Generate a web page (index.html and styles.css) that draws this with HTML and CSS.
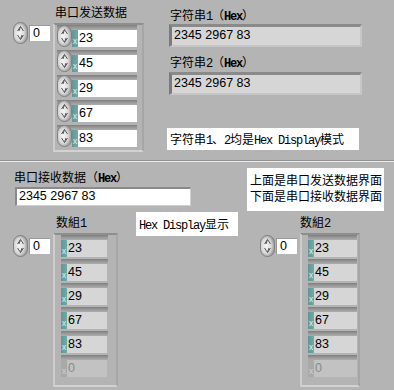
FILE: index.html
```html
<!DOCTYPE html>
<html>
<head>
<meta charset="utf-8">
<link rel="stylesheet" href="styles.css">
</head>
<body>
<svg class="defs" width="0" height="0">
  <defs>
    <radialGradient id="sg" cx="0.42" cy="0.5" r="0.62">
      <stop offset="0" stop-color="#f6f6f6"/>
      <stop offset="0.55" stop-color="#dadada"/>
      <stop offset="1" stop-color="#8c8c8c"/>
    </radialGradient>
  </defs>
</svg>

<section class="panel top">
  <div class="lbl l-send">串口发送数据</div>

  <div class="idx idx-send">
    <svg class="spin" viewBox="0 0 15 22" width="15" height="22"><rect x="0.5" y="0.5" width="14" height="21" rx="7" fill="url(#sg)" stroke="#808080"/><path d="M4.5 9 L7.5 4.5 L10.5 9" fill="none" stroke="#5a5a5a"/><path d="M7.5 4.5 L6 9" fill="none" stroke="#5a5a5a"/><path d="M4.5 13 L7.5 17.5 L10.5 13" fill="none" stroke="#5a5a5a"/><path d="M7.5 17.5 L9 13" fill="none" stroke="#5a5a5a"/></svg>
    <div class="ibox">0</div>
  </div>

  <div class="arr arr-send">
    <div class="row"><svg class="spin" viewBox="0 0 15 22" width="15" height="22"><rect x="0.5" y="0.5" width="14" height="21" rx="7" fill="url(#sg)" stroke="#808080"/><path d="M4.5 9 L7.5 4.5 L10.5 9" fill="none" stroke="#5a5a5a"/><path d="M7.5 4.5 L6 9" fill="none" stroke="#5a5a5a"/><path d="M4.5 13 L7.5 17.5 L10.5 13" fill="none" stroke="#5a5a5a"/><path d="M7.5 17.5 L9 13" fill="none" stroke="#5a5a5a"/></svg><span class="mk">x</span><span class="ebox ctl">23</span></div>
    <div class="row"><svg class="spin" viewBox="0 0 15 22" width="15" height="22"><rect x="0.5" y="0.5" width="14" height="21" rx="7" fill="url(#sg)" stroke="#808080"/><path d="M4.5 9 L7.5 4.5 L10.5 9" fill="none" stroke="#5a5a5a"/><path d="M7.5 4.5 L6 9" fill="none" stroke="#5a5a5a"/><path d="M4.5 13 L7.5 17.5 L10.5 13" fill="none" stroke="#5a5a5a"/><path d="M7.5 17.5 L9 13" fill="none" stroke="#5a5a5a"/></svg><span class="mk">x</span><span class="ebox ctl">45</span></div>
    <div class="row"><svg class="spin" viewBox="0 0 15 22" width="15" height="22"><rect x="0.5" y="0.5" width="14" height="21" rx="7" fill="url(#sg)" stroke="#808080"/><path d="M4.5 9 L7.5 4.5 L10.5 9" fill="none" stroke="#5a5a5a"/><path d="M7.5 4.5 L6 9" fill="none" stroke="#5a5a5a"/><path d="M4.5 13 L7.5 17.5 L10.5 13" fill="none" stroke="#5a5a5a"/><path d="M7.5 17.5 L9 13" fill="none" stroke="#5a5a5a"/></svg><span class="mk">x</span><span class="ebox ctl">29</span></div>
    <div class="row"><svg class="spin" viewBox="0 0 15 22" width="15" height="22"><rect x="0.5" y="0.5" width="14" height="21" rx="7" fill="url(#sg)" stroke="#808080"/><path d="M4.5 9 L7.5 4.5 L10.5 9" fill="none" stroke="#5a5a5a"/><path d="M7.5 4.5 L6 9" fill="none" stroke="#5a5a5a"/><path d="M4.5 13 L7.5 17.5 L10.5 13" fill="none" stroke="#5a5a5a"/><path d="M7.5 17.5 L9 13" fill="none" stroke="#5a5a5a"/></svg><span class="mk">x</span><span class="ebox ctl">67</span></div>
    <div class="row"><svg class="spin" viewBox="0 0 15 22" width="15" height="22"><rect x="0.5" y="0.5" width="14" height="21" rx="7" fill="url(#sg)" stroke="#808080"/><path d="M4.5 9 L7.5 4.5 L10.5 9" fill="none" stroke="#5a5a5a"/><path d="M7.5 4.5 L6 9" fill="none" stroke="#5a5a5a"/><path d="M4.5 13 L7.5 17.5 L10.5 13" fill="none" stroke="#5a5a5a"/><path d="M7.5 17.5 L9 13" fill="none" stroke="#5a5a5a"/></svg><span class="mk">x</span><span class="ebox ctl">83</span></div>
  </div>

  <div class="lbl l-s1">字符串<span class="m">1</span>（<span class="m b">Hex</span>）</div>
  <div class="strind s1">2345 2967 83</div>
  <div class="lbl l-s2">字符串<span class="m">2</span>（<span class="m b">Hex</span>）</div>
  <div class="strind s2">2345 2967 83</div>

  <div class="note n-mode">字符串<span class="m">1</span>、<span class="m">2</span>均是<span class="m">Hex Display</span>模式</div>
</section>

<section class="panel bottom">
  <div class="lbl l-recv">串口接收数据（<span class="m b">Hex</span>）</div>
  <div class="strctl">2345 2967 83</div>

  <div class="note n-info">上面是串口发送数据界面<br>下面是串口接收数据界面</div>
  <div class="note n-hex"><span class="m">Hex Display</span>显示</div>

  <div class="lbl l-a1">数組<span class="m">1</span></div>
  <div class="idx idx-a1">
    <svg class="spin" viewBox="0 0 15 22" width="15" height="22"><rect x="0.5" y="0.5" width="14" height="21" rx="7" fill="url(#sg)" stroke="#808080"/><path d="M4.5 9 L7.5 4.5 L10.5 9" fill="none" stroke="#5a5a5a"/><path d="M7.5 4.5 L6 9" fill="none" stroke="#5a5a5a"/><path d="M4.5 13 L7.5 17.5 L10.5 13" fill="none" stroke="#5a5a5a"/><path d="M7.5 17.5 L9 13" fill="none" stroke="#5a5a5a"/></svg>
    <div class="ibox">0</div>
  </div>
  <div class="arr arr-ind a1">
    <div class="row"><span class="mk">x</span><span class="ebox">23</span></div>
    <div class="row"><span class="mk">x</span><span class="ebox">45</span></div>
    <div class="row"><span class="mk">x</span><span class="ebox">29</span></div>
    <div class="row"><span class="mk">x</span><span class="ebox">67</span></div>
    <div class="row"><span class="mk">x</span><span class="ebox">83</span></div>
    <div class="row off"><span class="mk">x</span><span class="ebox">0</span></div>
  </div>

  <div class="lbl l-a2">数組<span class="m">2</span></div>
  <div class="idx idx-a2">
    <svg class="spin" viewBox="0 0 15 22" width="15" height="22"><rect x="0.5" y="0.5" width="14" height="21" rx="7" fill="url(#sg)" stroke="#808080"/><path d="M4.5 9 L7.5 4.5 L10.5 9" fill="none" stroke="#5a5a5a"/><path d="M7.5 4.5 L6 9" fill="none" stroke="#5a5a5a"/><path d="M4.5 13 L7.5 17.5 L10.5 13" fill="none" stroke="#5a5a5a"/><path d="M7.5 17.5 L9 13" fill="none" stroke="#5a5a5a"/></svg>
    <div class="ibox">0</div>
  </div>
  <div class="arr arr-ind a2">
    <div class="row"><span class="mk">x</span><span class="ebox">23</span></div>
    <div class="row"><span class="mk">x</span><span class="ebox">45</span></div>
    <div class="row"><span class="mk">x</span><span class="ebox">29</span></div>
    <div class="row"><span class="mk">x</span><span class="ebox">67</span></div>
    <div class="row"><span class="mk">x</span><span class="ebox">83</span></div>
    <div class="row off"><span class="mk">x</span><span class="ebox">0</span></div>
  </div>
</section>
</body>
</html>
```

FILE: styles.css
```css
html, body {
  margin: 0;
  padding: 0;
}
body {
  width: 394px;
  height: 390px;
  overflow: hidden;
  background: #b4b4b4;
  font-family: "Noto Sans CJK SC", sans-serif;
  font-size: 12px;
  color: #000;
}
.defs {
  position: absolute;
  width: 0;
  height: 0;
}

.panel {
  position: relative;
  width: 394px;
}
.top {
  height: 160px;
  border-bottom: 1px solid #929292;
}
.bottom {
  height: 228px;
  border-top: 1px solid #ececec;
}

/* labels (free-canvas positions on the front panel) */
.lbl {
  position: absolute;
  line-height: 14px;
  white-space: nowrap;
}
.m {
  font-family: "Liberation Mono", monospace;
  font-size: 12px;
  letter-spacing: -1.2px;
}
.b {
  font-weight: bold;
}
.l-send { left: 55px; top: 5px; }
.l-s1 { left: 170px; top: 8px; }
.l-s2 { left: 170px; top: 55px; }
.l-recv { left: 14px; top: 8px; }
.l-a1 { left: 56px; top: 53px; }
.l-a2 { left: 300px; top: 53px; }

/* spinner + index box */
.spin {
  display: block;
  flex: none;
}
.idx {
  position: absolute;
  display: flex;
  align-items: center;
  gap: 1px;
}
.idx-send { left: 13px; top: 22px; }
.idx-a1 { left: 13px; top: 73px; }
.idx-a2 { left: 260px; top: 73px; }
.ibox {
  width: 21px;
  height: 16px;
  box-sizing: border-box;
  background: #fff;
  border-top: 1px solid #9a9a9a;
  border-left: 1px solid #9a9a9a;
  padding-left: 3px;
  font-family: "Liberation Sans", sans-serif;
  font-size: 12.5px;
  line-height: 15px;
}

/* array frames */
.arr {
  position: absolute;
  box-sizing: border-box;
  display: flex;
  flex-direction: column;
  border: 2px solid;
  border-color: #8e8e8e #a6a6a6 #d2d2d2 #cdcdcd;
}
.arr-send {
  left: 53px;
  top: 23px;
  width: 91px;
  height: 129px;
  padding: 0 5px 0 2px;
}
.row {
  display: flex;
  align-items: flex-end;
  padding-bottom: 3px;
  height: 25px;
  box-sizing: border-box;
  background: linear-gradient(to bottom, #7e7e7e 0, #9e9e9e 3px, #acacac 5px, transparent 5px);
}
.mk {
  width: 6px;
  height: 17px;
  flex: none;
  box-sizing: border-box;
  background: linear-gradient(to right, #5d9896, #73a9a7);
  color: #d6f2f0;
  font-family: "Liberation Sans", sans-serif;
  font-size: 9px;
  line-height: 9px;
  display: flex;
  align-items: flex-end;
  justify-content: center;
  padding-bottom: 1px;
}
.ebox {
  height: 17px;
  box-sizing: border-box;
  background: #d6d6d6;
  padding-left: 1px;
  font-family: "Liberation Sans", sans-serif;
  font-size: 12.5px;
  line-height: 17px;
}
.ebox.ctl {
  width: 59px;
  background: #fff;
}

.arr-ind {
  top: 71px;
  height: 154px;
  padding-bottom: 6px;
}
.arr-ind .row {
  height: 24px;
  padding-bottom: 2px;
}
.a1 {
  left: 53px;
  width: 65px;
  padding-left: 6px;
  padding-right: 8px;
}
.a1 .ebox { width: 40px; }
.a2 {
  left: 300px;
  width: 60px;
  padding-left: 6px;
  padding-right: 1px;
}
.a2 .ebox { width: 43px; }
.row.off .mk {
  background: #a9a9a9;
  color: #cfcfcf;
}
.row.off .ebox {
  background: #c2c2c2;
  color: #8a8a8a;
}

/* string indicators / control */
.strind {
  position: absolute;
  left: 169px;
  width: 193px;
  height: 23px;
  box-sizing: border-box;
  background: #d6d6d6;
  border-style: solid;
  border-width: 3px 2px 2px 3px;
  border-color: #8a8a8a #c6c6c6 #c6c6c6 #7a7a7a;
  padding-left: 2px;
  font-family: "Liberation Sans", sans-serif;
  font-size: 12.5px;
  line-height: 17px;
}
.s1 { top: 24px; }
.s2 { top: 72px; }
.strctl {
  position: absolute;
  left: 15px;
  top: 25px;
  width: 176px;
  height: 19px;
  box-sizing: border-box;
  background: #fff;
  border-style: solid;
  border-width: 2px 1px 1px 2px;
  border-color: #8a8a8a #d0d0d0 #d0d0d0 #8a8a8a;
  padding-left: 2px;
  font-family: "Liberation Sans", sans-serif;
  font-size: 12.5px;
  line-height: 15px;
}

/* free labels */
.note {
  position: absolute;
  background: #fff;
  box-sizing: border-box;
  white-space: nowrap;
  padding-left: 3px;
}
.n-mode {
  left: 167px;
  top: 128px;
  width: 192px;
  height: 22px;
  line-height: 22px;
}
.n-info {
  left: 247px;
  top: 6px;
  width: 137px;
  height: 43px;
  padding-top: 4px;
  line-height: 16px;
}
.n-hex {
  left: 136px;
  top: 50px;
  width: 102px;
  height: 24px;
  line-height: 24px;
}
```
